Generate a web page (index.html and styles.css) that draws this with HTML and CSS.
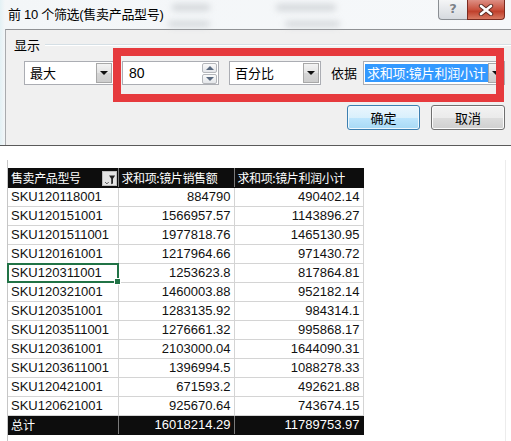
FILE: index.html
```html
<!DOCTYPE html>
<html lang="zh">
<head>
<meta charset="utf-8">
<title>前 10 个筛选</title>
<link rel="stylesheet" href="styles.css">
</head>
<body>
<div class="dialog">
  <div class="titlebar">
    <span class="blur b1"></span><span class="blur b2"></span><span class="blur b3"></span><span class="blur b4"></span>
    <div class="title">前 10 个筛选(售卖产品型号)</div>
    <div class="caption-btns">
      <div class="help">?</div>
      <div class="close">
        <svg width="18" height="12" viewBox="0 0 18 12">
          <path d="M4 2 L14 10 M14 2 L4 10" stroke="#5a2a22" stroke-width="4.4" stroke-linecap="round"/>
          <path d="M4 2 L14 10 M14 2 L4 10" stroke="#ffffff" stroke-width="2.6" stroke-linecap="round"/>
        </svg>
      </div>
    </div>
  </div>
  <div class="client">
    <div class="group-head"><span class="group-label">显示</span><span class="group-line"></span></div>
    <div class="controls">
      <div class="combo c1"><span class="combo-text">最大</span><span class="drop"><i class="tri"></i></span></div>
      <div class="spin"><span class="combo-text num">80</span><span class="spin-btns"><span class="sb"><i class="up"></i></span><span class="sb"><i class="down"></i></span></span></div>
      <div class="combo c2"><span class="combo-text">百分比</span><span class="drop"><i class="tri"></i></span></div>
      <span class="by">依据</span>
      <div class="combo c3"><span class="combo-text sel">求和项:镜片利润小计</span><span class="drop"><i class="tri"></i></span></div>
    </div>
    <div class="buttons">
      <div class="btn ok">确定</div>
      <div class="btn">取消</div>
    </div>
  </div>
  <div class="mark"></div>
</div>
<div class="sheet">
  <table class="grid">
    <colgroup><col class="w1"><col class="w2"><col class="w3"></colgroup>
    <thead>
      <tr class="dark">
        <th class="hd1">售卖产品型号<span class="filter"><svg width="15" height="15" viewBox="0 0 15 15"><path d="M2.5 10.5 L4.5 12.5 L6.5 10.5" fill="none" stroke="#333" stroke-width="1"/><path d="M7 3 H14 L11.5 6.5 V12 L9.5 13 V6.5 Z" fill="#222"/></svg></span></th>
        <th>求和项:镜片销售额</th>
        <th>求和项:镜片利润小计</th>
      </tr>
    </thead>
    <tbody>
      <tr><td>SKU120118001</td><td class="n">884790</td><td class="n">490402.14</td></tr>
      <tr><td>SKU120151001</td><td class="n">1566957.57</td><td class="n">1143896.27</td></tr>
      <tr><td>SKU1201511001</td><td class="n">1977818.76</td><td class="n">1465130.95</td></tr>
      <tr><td>SKU120161001</td><td class="n">1217964.66</td><td class="n">971430.72</td></tr>
      <tr><td class="active">SKU120311001</td><td class="n">1253623.8</td><td class="n">817864.81</td></tr>
      <tr><td>SKU120321001</td><td class="n">1460003.88</td><td class="n">952182.14</td></tr>
      <tr><td>SKU120351001</td><td class="n">1283135.92</td><td class="n">984314.1</td></tr>
      <tr><td>SKU1203511001</td><td class="n">1276661.32</td><td class="n">995868.17</td></tr>
      <tr><td>SKU120361001</td><td class="n">2103000.04</td><td class="n">1644090.31</td></tr>
      <tr><td>SKU1203611001</td><td class="n">1396994.5</td><td class="n">1088278.33</td></tr>
      <tr><td>SKU120421001</td><td class="n">671593.2</td><td class="n">492621.88</td></tr>
      <tr><td>SKU120621001</td><td class="n">925670.64</td><td class="n">743674.15</td></tr>
    </tbody>
    <tfoot>
      <tr class="dark"><td class="total">总计</td><td class="n">16018214.29</td><td class="n">11789753.97</td></tr>
    </tfoot>
  </table>
</div>
</body>
</html>
```

FILE: styles.css
```css
* { box-sizing: border-box; }
html, body { margin: 0; padding: 0; }
body {
  width: 511px;
  height: 441px;
  overflow: hidden;
  background: #ffffff;
  font-family: "Noto Sans CJK SC", "Liberation Sans", sans-serif;
  color: #000;
}

/* ---------- dialog ---------- */
.dialog {
  position: relative;
  height: 146px;
  background: linear-gradient(to right, #e3f1f5 0px, #f3f6f8 5px, #f6f8fa 100%);
  border-bottom: 1px solid #5a5a5a;
}
.titlebar {
  position: relative;
  height: 29px;
  display: flex;
  justify-content: space-between;
  align-items: flex-start;
}
.blur {
  position: absolute;
  background: #bfc3c7;
  filter: blur(3px);
  border-radius: 3px;
  opacity: .6;
}
.b1 { left: 172px; top: 4px; width: 38px; height: 7px; }
.b2 { left: 168px; top: 21px; width: 42px; height: 6px; }
.b3 { left: 276px; top: 4px; width: 60px; height: 7px; }
.b4 { left: 285px; top: 21px; width: 55px; height: 6px; }
.title {
  position: relative;
  padding: 5px 0 0 8px;
  font-family: "Liberation Sans", "Noto Sans CJK SC", sans-serif;
  font-size: 13px;
  line-height: 19px;
  letter-spacing: -0.3px;
}
.caption-btns {
  position: relative;
  display: flex;
  margin-right: 6px;
}
.help {
  width: 29px;
  height: 20px;
  border: 1px solid #8a8e93;
  border-top: 0;
  border-right: 0;
  border-radius: 0 0 0 4px;
  background: linear-gradient(#f4f5f6, #d6dadf);
  color: #7b8087;
  font-family: "DejaVu Sans", sans-serif;
  font-size: 13px;
  line-height: 18px;
  text-align: center;
  font-weight: bold;
  text-shadow: 0 0 1px #fff;
}
.close {
  width: 38px;
  height: 20px;
  border: 1px solid #7a2b20;
  border-top: 0;
  border-radius: 0 0 4px 0;
  background: linear-gradient(#dd8f84, #c9523f 50%, #c0402c 60%, #d87a63);
  display: flex;
  align-items: center;
  justify-content: center;
}

.client {
  margin-left: 5px;
  height: 116px;
  background: #f0f0f0;
  border-top: 1px solid #8f9194;
  border-left: 1px solid #a9abae;
}
.group-head {
  display: flex;
  align-items: center;
  padding: 7px 0 0 8px;
  height: 23px;
}
.group-label {
  font-size: 13px;
  line-height: 16px;
}
.group-line {
  flex: 1;
  margin-left: 5px;
  height: 2px;
  border-top: 1px solid #d5dfe5;
  border-bottom: 1px solid #ffffff;
}
.controls {
  display: flex;
  align-items: center;
  margin-top: 8px;
  padding-left: 18px;
  height: 24px;
}
.combo, .spin {
  position: relative;
  height: 24px;
  background: #fff;
  border: 1px solid #abadb3;
  display: flex;
  align-items: center;
}
.c1 { width: 90px; }
.spin { width: 97px; margin-left: 8px; }
.c2 { width: 92px; margin-left: 10px; }
.c3 { width: 142px; margin-left: 6px; }
.combo-text {
  flex: 1;
  font-size: 13px;
  line-height: 18px;
  padding-left: 5px;
  white-space: nowrap;
  overflow: hidden;
}
.num { font-family: "Liberation Sans", sans-serif; font-size: 14px; padding-left: 6px; }
.sel {
  flex: none;
  margin-left: 1px;
  padding: 0 2px;
  width: 123px;
  background: #3399ff;
  color: #fff;
  letter-spacing: -0.2px;
}
.c3 .drop { margin-left: auto; }
.drop {
  width: 16px;
  height: 20px;
  margin-right: 1px;
  border: 1px solid #a8a8a8;
  background: linear-gradient(#f3f3f3, #e3e3e3 50%, #d6d6d6 51%, #cdcdcd);
  display: flex;
  align-items: center;
  justify-content: center;
}
.tri {
  width: 0; height: 0;
  border-left: 4px solid transparent;
  border-right: 4px solid transparent;
  border-top: 4px solid #111;
}
.spin-btns {
  display: flex;
  flex-direction: column;
  gap: 1px;
  margin-right: 1px;
}
.sb {
  width: 15px;
  height: 10px;
  border: 1px solid #b5b7bb;
  border-radius: 2px;
  background: linear-gradient(#fafafa, #e4e6ea);
  display: flex;
  align-items: center;
  justify-content: center;
}
.up, .down {
  width: 0; height: 0;
  border-left: 4px solid transparent;
  border-right: 4px solid transparent;
}
.up { border-bottom: 4px solid #5a6a80; }
.down { border-top: 4px solid #5a6a80; }
.by {
  margin-left: 10px;
  font-size: 13px;
  line-height: 16px;
  width: 26px;
}
.buttons {
  display: flex;
  justify-content: flex-end;
  gap: 11px;
  margin-top: 20px;
  padding-right: 6px;
}
.btn {
  width: 74px;
  height: 25px;
  border: 1px solid #707070;
  border-radius: 3px;
  background: linear-gradient(#f2f2f2, #ebebeb 50%, #dddddd 51%, #cfcfcf);
  font-size: 13px;
  line-height: 23px;
  text-align: center;
  box-shadow: inset 0 0 0 1px #fcfcfc;
}
.ok {
  width: 73px;
  border-color: #3c7fb1;
  background: linear-gradient(#eaf6fd, #d9f0fc 50%, #bee6fd 51%, #a7d9f5);
  box-shadow: inset 0 0 0 1px #eef8fe;
}

/* red annotation frame laid over the dialog */
.mark {
  position: absolute;
  left: 113px;
  top: 48px;
  width: 391px;
  height: 54px;
  border: 8px solid #e63a3d;
}

/* ---------- sheet ---------- */
.sheet {
  margin: 14px 5px 0 7px;
  height: 281px;
  padding-top: 8px;
  border-left: 1px solid #c6c6c6;
  border-right: 1px solid #ececec;
}
.grid {
  border-collapse: collapse;
  table-layout: fixed;
  width: 355px;
  font-family: "Liberation Sans", "Noto Sans CJK SC", sans-serif;
  font-size: 13px;
  color: #111;
}
.w1 { width: 110px; }
.w2 { width: 116px; }
.w3 { width: 129px; }
.grid th, .grid td {
  height: 19px;
  padding: 0 3px;
  line-height: 18px;
  white-space: nowrap;
  overflow: hidden;
  border: 1px solid #d4d4d4;
  border-left: 0;
}
.grid tbody tr:first-child td { border-top: 0; }
.grid th {
  font-family: "Noto Sans CJK SC", sans-serif;
  font-size: 12px;
  font-weight: normal;
  text-align: left;
  letter-spacing: -0.4px;
}
.dark th, .dark td {
  background: #0d0d0d;
  color: #fff;
  border-color: #0d0d0d;
  border-right: 1px solid #7a7a7a;
}
.dark th:last-child, .dark td:last-child { border-right-color: #0d0d0d; }
.hd1 { position: relative; }
.filter {
  position: absolute;
  right: 1px;
  top: 2px;
  width: 15px;
  height: 15px;
  background: #e4e4e4;
  border: 1px solid #bdbdbd;
  display: flex;
}
.n { text-align: right; }
.total {
  font-family: "Noto Sans CJK SC", sans-serif;
  font-size: 12px;
}
.grid td.active { position: relative; overflow: visible; }
.active::after {
  content: "";
  position: absolute;
  left: -1px;
  top: -1px;
  right: -1px;
  bottom: -1px;
  border: 2px solid #217346;
}
.active::before {
  content: "";
  position: absolute;
  right: -3px;
  bottom: -3px;
  width: 5px;
  height: 5px;
  background: #217346;
  border: 1px solid #fff;
  z-index: 1;
}
```
